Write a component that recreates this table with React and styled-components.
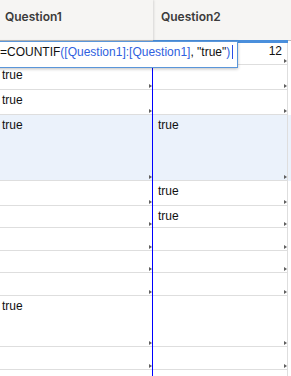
import styled, { createGlobalStyle } from 'styled-components'

const GlobalStyle = createGlobalStyle`
  html, body {
    margin: 0;
    padding: 0;
    background: #fff;
    overflow: hidden;
  }
  * {
    box-sizing: border-box;
  }
`;

const Sheet = styled.div`
  position: relative;
  width: 291px;
  height: 376px;
  overflow: hidden;
  background: #fff;
  font-family: "Liberation Sans", Arial, sans-serif;
`;

const HeaderRow = styled.div`
  display: flex;
  height: 41px;
  background: #f6f5f3;
`;

const HeaderCell = styled.div`
  width: ${p => p.$width}px;
  flex: none;
  padding: 9px 0 0 8px;
  font-family: Inter, "Noto Sans", sans-serif;
  font-weight: 600;
  font-size: 12px;
  line-height: 15px;
  color: #3b3b3b;
  border-bottom: ${p => (p.$selected ? '3px solid #4a8fdc' : '1px solid #b9b9b9')};
  margin-bottom: ${p => (p.$selected ? '-2px' : '0')};
  box-shadow: ${p => (p.$raised ? '1px 0 2px rgba(0,0,0,0.12)' : 'none')};
  position: relative;
  z-index: ${p => (p.$selected ? 1 : 0)};
`;

const Grid = styled.div`
  display: flex;
  flex-direction: column;
  margin-left: -3px;
`;

const HeaderWrap = styled.div`
  margin-left: -3px;
`;

const Row = styled.div`
  display: flex;
  height: ${p => p.$height}px;
  background: ${p => (p.$highlight ? '#ebf2fb' : '#fff')};
`;

const Cell = styled.div`
  position: relative;
  width: ${p => p.$width}px;
  flex: none;
  padding: 3px 5px 0 5px;
  font-size: 12px;
  line-height: 14px;
  color: #111;
  text-align: ${p => (p.$align === 'right' ? 'right' : 'left')};
  border-bottom: 1px solid #dedede;
  border-right: 1px solid #dedede;
  white-space: nowrap;

  &::after {
    content: '';
    position: absolute;
    right: 0;
    bottom: 1px;
    width: 0;
    height: 0;
    border-left: 3px solid #5f5f5f;
    border-top: 2px solid transparent;
    border-bottom: 2px solid transparent;
  }
`;

const DragGuide = styled.div`
  position: absolute;
  left: 152px;
  top: 41px;
  bottom: 0;
  width: 1px;
  background: #0000ff;
`;

const FormulaEditor = styled.div`
  position: absolute;
  left: -4px;
  top: 41px;
  width: 242px;
  height: 27px;
  padding: 3px 0 0 3px;
  background: #fff;
  border: 1px solid #5a96da;
  box-shadow: 0 1px 3px rgba(0, 0, 0, 0.25);
  font-size: 12px;
  line-height: 14px;
  color: #111;
  white-space: nowrap;
  z-index: 2;
`;

const Ref = styled.span`
  color: #2f5fe0;
`;

const Caret = styled.span`
  display: inline-block;
  width: 1px;
  height: 14px;
  margin-left: 2px;
  vertical-align: -3px;
  background: #2b4fe8;
`;

const columns = [
  { key: 'a', title: 'Question1', width: 156 },
  { key: 'b', title: 'Question2', width: 135 },
];

const rows = [
  { h: 24, b: '12', bAlign: 'right' },
  { h: 25, a: 'true' },
  { h: 25, a: 'true' },
  { h: 66, a: 'true', b: 'true', highlight: true },
  { h: 25, b: 'true' },
  { h: 22, b: 'true' },
  { h: 23 },
  { h: 22 },
  { h: 23 },
  { h: 51, a: 'true' },
  { h: 23 },
  { h: 23 },
];

export default function App() {
  return (
    <Sheet>
      <GlobalStyle />
      <HeaderWrap>
        <HeaderRow>
          <HeaderCell $width={156} $raised>Question1</HeaderCell>
          <HeaderCell $width={135} $selected>Question2</HeaderCell>
          <HeaderCell $width={10} />
        </HeaderRow>
      </HeaderWrap>
      <Grid>
        {rows.map((r, i) => (
          <Row key={i} $height={r.h} $highlight={r.highlight}>
            {columns.map(c => (
              <Cell key={c.key} $width={c.width} $align={r[c.key + 'Align']}>
                {r[c.key] || ''}
              </Cell>
            ))}
          </Row>
        ))}
      </Grid>
      <DragGuide />
      <FormulaEditor>
        =COUNTIF<Ref>([Question1]:[Question1]</Ref>, "true"<Ref>)</Ref>
        <Caret />
      </FormulaEditor>
    </Sheet>
  )
}
